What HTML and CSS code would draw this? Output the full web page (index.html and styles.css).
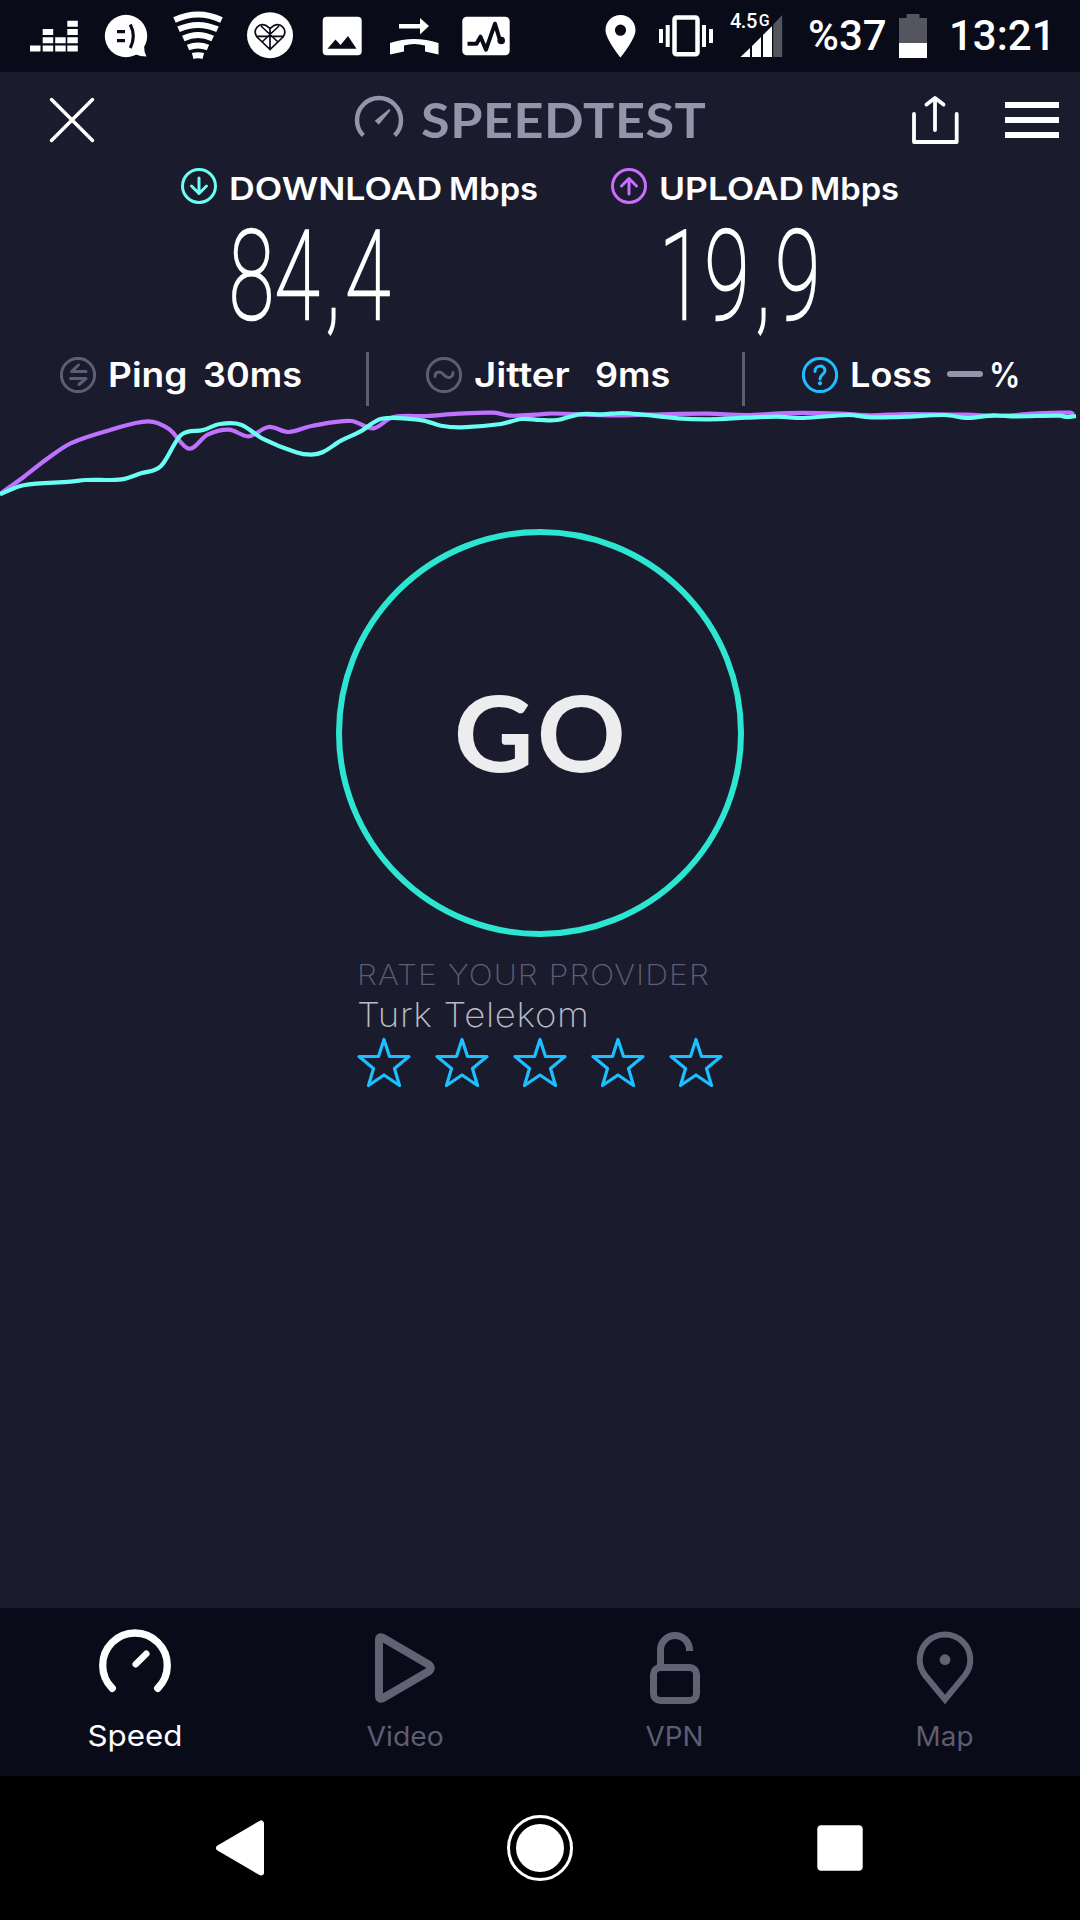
FILE: index.html
```
<!DOCTYPE html>
<html lang="en">
<head>
<meta charset="utf-8">
<title>Speedtest</title>
<link rel="stylesheet" href="styles.css">
</head>
<body>
<div class="screen">
  <div class="status">
    <svg class="tile" viewBox="18 0 72 72"><path d="M30 45.5h10.500v6H30zM42.700 45.500h10.500v6H42.700zM42.700 37.300h10.500v6H42.700zM42.700 29h10.500v6H42.700zM55.200 45.500h10.500v6H55.200zM55.200 37.300h10.500v6H55.200zM67.300 45.500h10.500v6H67.300zM67.300 37.300h10.500v6H67.300zM67.300 29h10.500v6H67.300zM67.300 20.800h10.500v6H67.300z"/></svg>
    <svg class="tile" viewBox="90 0 72 72"><circle cx="126" cy="36" r="21.200"/><path d="M144 46q0 6 2.500 10.500q-7 0-13-3z"/><path class="cut" d="M117 31.700h8M117 40.600h8M130.300 24.500q6 11.500 0 23.500"/></svg>
    <svg class="tile" viewBox="162 0 72 72"><path class="arc" d="M174.500 20Q198 9 221.500 20M178.500 29.300Q198 20.500 217.500 29.300M183.300 38.500Q198 31.500 212.700 38.500M188 47.500Q198 43.500 208 47.500M192.700 56Q198 54.500 203.300 56"/></svg>
    <svg class="tile" viewBox="234 0 72 72"><circle cx="270" cy="35.300" r="23"/><path class="web" d="M270 49.500L257 37C252 30 259 22 266 25.500L270 28.500L274 25.500C281 22 288 30 283 37ZM270 28V49M256 36.300h28M261 26l17 16M279 26l-17 16"/></svg>
    <svg class="tile" viewBox="306 0 72 72"><rect x="322.700" y="16.700" width="39" height="38.600" rx="4"/><path class="dark" d="M327.500 48.700L335.500 39.500L340.500 45L348 36L356.500 48.700Z"/></svg>
    <svg class="tile" viewBox="378 0 72 72"><path d="M399 24h21v-6l9 8-9 8.500v-6h-21zM390 43Q414 35 438.500 43V54.500L425 51.500V45.500Q414 42.500 404 45.500V51.500L390 54.500Z"/></svg>
    <svg class="tile" viewBox="450 0 72 72"><rect x="462.300" y="16.700" width="47.400" height="38.600" rx="4.500"/><path class="pulse" d="M467.500 43.700h9l4-7 5.500 13 9-26 4.500 15"/><circle class="dark" cx="501.200" cy="40.500" r="3.800"/></svg>
    <svg class="tile pin" viewBox="588 0 65 72"><path fill-rule="evenodd" d="M620.500 15c8.500 0 15 6.700 15 15.200C635.500 39 620.500 57.500 620.500 57.500S605.500 39 605.500 30.200C605.500 21.700 612 15 620.500 15zm0 9.600a5.600 5.600 0 1 0 0 11.200a5.600 5.600 0 0 0 0-11.200z"/></svg>
    <svg class="tile vibrate" viewBox="653 0 72 72"><rect class="phone" x="674.500" y="17.500" width="23" height="36.700" rx="2"/><path d="M659 29h4v14h-4zM665.700 25h4v22h-4zM702 25h4v22h-4zM709 29h4v14h-4z"/></svg>
    <div class="signal">
      <span class="net">4.5<sup>G</sup></span>
      <svg viewBox="740 14 43 44"><path d="M740.500 57L750 48v9zM752 46l9-9v20h-9zM763 35l9-9v31h-9z"/><path class="dim" d="M773.300 24.500l8.900-9.500v42h-8.900z"/></svg>
    </div>
    <span class="percent">%37</span>
    <svg class="battery" viewBox="899 14 28 44"><path class="dim" d="M899 18h7.500v-4h13v4H927v25h-28z"/><path d="M899 43h28v15h-28z"/></svg>
    <span class="clock">13:21</span>
  </div>

  <header class="header">
    <svg class="close" viewBox="48 96 48 48"><path d="M51.500 99.500l41 41M92.500 99.500l-41 41"/></svg>
    <svg class="logo" viewBox="354 95 50 44"><path class="ring" d="M363.300 135.500A22 22 0 1 1 394.700 135.500"/><path class="needle" d="M389.500 108.700L390.300 110.800L378.800 124.800L374.700 120.700Z"/></svg>
    <h1>SPEEDTEST</h1>
    <svg class="share" viewBox="911 95 50 50"><path d="M914 114v28h42.700v-28M935 99v31M926.500 104.500l8.500-6.500 8.500 6.500"/></svg>
    <svg class="menu" viewBox="0 0 54 36"><path d="M0 0h54v6H0zM0 15h54v6H0zM0 30h54v6H0z"/></svg>
  </header>

  <section class="results">
    <div class="result">
      <svg class="badge down" viewBox="0 0 36 36"><circle cx="18" cy="18" r="16.500"/><path d="M18 10v15.500M10.500 18l7.500 7.500 7.500-7.500"/></svg>
      <div><h2><span class="w-down">DOWNLOAD</span><span class="unit">Mbps</span></h2><p class="figure">84<span class="comma">,</span>4</p></div>
    </div>
    <div class="result">
      <svg class="badge up" viewBox="0 0 36 36"><circle cx="18" cy="18" r="16.500"/><path d="M18 26v-15.500M10.500 18l7.500-7.500 7.500 7.500"/></svg>
      <div><h2><span class="w-up">UPLOAD</span><span class="unit">Mbps</span></h2><p class="figure">19<span class="comma">,</span>9</p></div>
    </div>
  </section>

  <section class="quality">
    <div class="metric ping">
      <svg class="badge grey" viewBox="0 0 36 36"><circle cx="18" cy="18" r="16.600"/><path d="M26 14.500H11.500L18.500 8M10.500 21.500h15.500l-7 6"/></svg>
      <span class="name">Ping</span><span class="value">30ms</span>
    </div>
    <div class="metric jitter">
      <svg class="badge grey" viewBox="0 0 36 36"><circle cx="18" cy="18" r="16.600"/><path d="M9 19.500C9 14.500 14 13.500 18 18S27 20.500 27 15.500"/></svg>
      <span class="name">Jitter</span><span class="value">9ms</span>
    </div>
    <div class="metric loss">
      <svg class="badge blue" viewBox="0 0 36 36"><circle cx="18" cy="18" r="16.600"/><path d="M13 14.500c0-7 10-7 10-1 0 4-5 4-5 8.500"/><circle class="dot" cx="18" cy="26.300" r="2.100"/></svg>
      <span class="name">Loss</span><i class="dash"></i><span class="value">%</span>
    </div>
  </section>

  <svg class="chart" viewBox="0 406 1080 94">
    <path id="upload-line" class="line-up"/>
    <path id="download-line" class="line-down"/>
  </svg>

  <button class="go"><span>GO</span></button>

  <section class="rate">
    <p class="ask">RATE YOUR PROVIDER</p>
    <p class="provider">Turk Telekom</p>
    <div class="stars">
      <svg viewBox="0 0 54 51"><path d="M27 2.500L32.500 19.500H52L37.500 31.500L42.500 48.500L27 38L11.500 48.500L16.500 31.500L2 19.500H21.500Z"/></svg>
      <svg viewBox="0 0 54 51"><path d="M27 2.500L32.500 19.500H52L37.500 31.500L42.500 48.500L27 38L11.500 48.500L16.500 31.500L2 19.500H21.500Z"/></svg>
      <svg viewBox="0 0 54 51"><path d="M27 2.500L32.500 19.500H52L37.500 31.500L42.500 48.500L27 38L11.500 48.500L16.500 31.500L2 19.500H21.500Z"/></svg>
      <svg viewBox="0 0 54 51"><path d="M27 2.500L32.500 19.500H52L37.500 31.500L42.500 48.500L27 38L11.500 48.500L16.500 31.500L2 19.500H21.500Z"/></svg>
      <svg viewBox="0 0 54 51"><path d="M27 2.500L32.500 19.500H52L37.500 31.500L42.500 48.500L27 38L11.500 48.500L16.500 31.500L2 19.500H21.500Z"/></svg>
    </div>
  </section>

  <nav class="tabs">
    <a class="tab active"><svg viewBox="0 0 90 90"><path stroke-width="7.300" d="M22.300 66.300A32.300 32.300 0 1 1 67.700 66.300"/><path stroke-width="6.500" d="M45.700 42.300L56.300 31.700"/></svg><span class="t-speed">Speed</span></a>
    <a class="tab"><svg viewBox="0 0 90 90"><path stroke-width="8" d="M19 18Q19 13.500 24 16.500L68.500 42.500Q73 46 68.500 49.500L24 75.500Q19 78.500 19 74Z"/></svg><span class="t-video">Video</span></a>
    <a class="tab"><svg viewBox="0 0 90 90"><rect stroke-width="7" x="23.500" y="45.500" width="43" height="33" rx="7"/><path class="butt" stroke-width="7" d="M30.500 45V28a14.500 14.500 0 0 1 29 0v1"/></svg><span class="t-vpn">VPN</span></a>
    <a class="tab"><svg viewBox="0 0 90 90"><path class="miter" stroke-width="6" d="M45 77.500L25.200 53.500A25.300 25.300 0 1 1 64.800 53.500Z"/><circle class="pip" cx="45" cy="37.700" r="5.400"/></svg><span class="t-map">Map</span></a>
  </nav>

  <div class="system">
    <svg viewBox="0 0 72 72"><path class="back" d="M15 36L57 11.500V60.500Z"/></svg>
    <svg viewBox="0 0 72 72"><circle class="outer" cx="36" cy="36" r="31.500"/><circle cx="36" cy="36" r="24"/></svg>
    <svg viewBox="0 0 72 72"><rect x="13.300" y="13.300" width="45.400" height="45.400" rx="4"/></svg>
  </div>
</div>
<script src="chart.js"></script>
</body>
</html>
```
FILE: styles.css
```
* { box-sizing: border-box; }
body, h1, h2, p { margin: 0; font-weight: inherit; }
body { background: #1b1b2e; font-family: Inter, "Liberation Sans", sans-serif; color: #fff; }
svg { display: block; flex: none; fill: #fff; }
span { white-space: nowrap; }

.screen { width: 1080px; height: 1920px; display: flex; flex-direction: column; overflow: hidden; }

/* status bar */
.status { height: 72px; flex: none; background: #090b19; display: flex; align-items: center; padding-left: 18px; font-family: Roboto, sans-serif; font-weight: 500; font-size: 42px; line-height: 72px; }
.tile { width: 72px; height: 72px; }
.tile.pin { width: 65px; margin-left: 66px; }
.cut { fill: none; stroke: #090b19; stroke-width: 3.2; }
.arc { fill: none; stroke: #fff; stroke-width: 6; }
.web { fill: none; stroke: #090b19; stroke-width: 1.700; }
.dark { fill: #090b19; }
.pulse { fill: none; stroke: #090b19; stroke-width: 4; stroke-linejoin: round; }
.phone { fill: none; stroke: #fff; stroke-width: 4.500; }
.dim { fill: #55555f; }
.signal { width: 58px; height: 72px; display: grid; }
.signal > * { grid-area: 1 / 1; }
.signal svg { width: 43px; height: 44px; margin: 14px 0 0 15px; }
.net { font-size: 20px; line-height: 24px; margin: 9px 0 0 5px; letter-spacing: -.5px; }
.net sup { font-size: 16px; line-height: 0; vertical-align: 2.500px; margin-left: 2px; }
.percent { width: 91px; margin-left: 25px; }
.battery { width: 28px; height: 44px; }
.clock { margin-left: 22px; }

/* title row */
.header { height: 96px; flex: none; display: flex; align-items: flex-start; padding: 24px 21px 0 48px; }
.close { width: 48px; height: 48px; }
.close path { stroke: #fff; stroke-width: 3.500; stroke-linecap: round; }
.logo { width: 50px; height: 44px; margin: -1px 0 0 258px; }
.ring { fill: none; stroke: #9494ab; stroke-width: 4.500; }
.needle { fill: #9494ab; }
.header h1 { width: 291px; margin-left: 17px; font: 700 47px/48px Lato, sans-serif; letter-spacing: .5px; color: #9494ab; transform: scaleX(1.110); transform-origin: 0 0; }
.share { width: 50px; height: 50px; margin: -1px 0 0 199px; }
.share path { fill: none; stroke: #fff; stroke-width: 3.800; stroke-linecap: round; stroke-linejoin: round; }
.menu { width: 54px; height: 36px; margin: 6px 0 0 44px; }

/* download and upload figures */
.results { height: 182px; flex: none; display: flex; padding-left: 181px; }
.result { width: 430px; display: flex; gap: 12px; }
.badge { width: 36px; height: 36px; fill: none; stroke-width: 3; stroke-linecap: round; stroke-linejoin: round; }
.down { stroke: #6afff3; }
.up { stroke: #c86eff; }
.grey { stroke: #5d5d73; }
.blue { stroke: #1cbfff; }
.badge .dot { fill: #1cbfff; stroke: none; }
.result h2 { height: 42px; display: flex; font-size: 31.500px; line-height: 42px; font-weight: 600; }
.w-down { width: 220px; transform: scaleX(1.135); transform-origin: 0 0; }
.w-up { width: 150.500px; transform: scaleX(1.125); transform-origin: 0 0; }
.unit { transform: scaleX(1.040); transform-origin: 0 0; }
.figure { height: 130px; padding-top: 2px; font: 100 124px/130px Roboto, sans-serif; letter-spacing: 1px; transform: scaleX(.660); transform-origin: 0 0; -webkit-text-stroke: 2.600px #fff; }
.comma { margin: 0 6px 0 8px; }

/* ping, jitter, loss */
.quality { height: 56px; flex: none; display: flex; align-items: stretch; padding-top: 2px; }
.metric { display: flex; align-items: flex-start; font-size: 34px; line-height: 36px; font-weight: 600; height: 54px; padding-top: 5px; }
.ping { width: 369px; padding-left: 60px; border-right: 3px solid #5d5d73; }
.jitter { width: 376px; padding-left: 57px; border-right: 3px solid #5d5d73; }
.loss { padding-left: 57px; }
.metric .name { margin-left: 12px; }
.metric .name, .metric .value { transform-origin: 0 0; }
.metric .value { transform: scaleX(1.060); }
.ping .name { width: 95px; transform: scaleX(1.090); }
.jitter .name { width: 121px; transform: scaleX(1.130); }
.loss .name { width: 97px; transform: scaleX(1.060); }
.loss .value { transform: scaleX(.920); }
.dash { width: 36px; height: 6px; border-radius: 3px; margin: 14px 6px 0 0; background: #9494ab; }

.chart { width: 1080px; height: 94px; }
.chart path { fill: none; stroke-width: 4.200; stroke-linejoin: round; }
.line-up { stroke: #bf71ff; }
.line-down { stroke: #6afff3; }

.go { width: 408px; height: 408px; flex: none; margin: 29px auto 0; padding: 0 0 5px 3px; border: 6px solid #2ce6d1; border-radius: 50%; background: none; color: #ededf0; font: 700 106px/1 Lato, sans-serif; letter-spacing: 3px; }
.go span { display: inline-block; transform: scaleX(1.040); }

/* provider rating */
.rate { width: 366px; margin: 19px auto 0; }
.ask, .provider { white-space: nowrap; transform-origin: 0 0; }
.ask { height: 38px; font-size: 28.500px; line-height: 37px; font-weight: 250; letter-spacing: 1px; color: #5f5f73; transform: scaleX(1.112); }
.provider { height: 43px; font-size: 34.500px; line-height: 42px; font-weight: 250; letter-spacing: .6px; color: #bcbcc2; transform: scaleX(1.062); }
.stars { display: flex; gap: 24px; }
.stars svg { width: 54px; height: 51px; fill: none; stroke: #1cbfff; stroke-width: 3.200; stroke-linejoin: round; }

/* bottom tabs */
.tabs { height: 168px; flex: none; margin-top: auto; background: #090b19; display: grid; grid-template-columns: repeat(4, 1fr); }
.tab { display: flex; flex-direction: column; align-items: center; padding-top: 14px; font-size: 26.500px; line-height: 36px; color: #5d5d73; }
.tab svg { width: 90px; height: 90px; fill: none; stroke: #626275; stroke-linecap: round; stroke-linejoin: round; }
.tab.active { color: #fff; font-size: 29px; }
.tab.active svg { stroke: #fff; }
.tab span { margin-top: 6px; }
.t-speed { transform: scaleX(1.080); }
.t-video { transform: scaleX(1.070); }
.t-vpn, .t-map { transform: scaleX(1.050); }
.tab .butt { stroke-linecap: butt; }
.tab .miter { stroke-linejoin: miter; }
.tab .pip { fill: #626275; stroke: none; }

/* system navigation */
.system { height: 144px; flex: none; background: #000; display: flex; justify-content: center; align-items: center; gap: 228px; }
.system svg { width: 72px; height: 72px; }
.system .back { stroke: #fff; stroke-width: 6; stroke-linejoin: round; }
.system .outer { fill: none; stroke: #fff; stroke-width: 3; }
```
FILE: chart.js
```
const upload = [[0,494],[24,476.7],[46.5,459.3],[70.6,443.3],[110,430],[148,421.3],[169,429],[189,448.7],[207.6,434.7],[229,429.7],[248.6,436.3],[268.6,427],[288.6,432],[311.6,426],[351,421],[373.6,428.3],[392.5,417.3],[427,416],[458,413.7],[494,412.7],[511,415.7],[540,414.3],[552,413.5],[616,415.5],[671,414],[709,413.7],[746.6,415],[788,413],[839.6,413.5],[870.6,415.3],[905,414],[967,414.7],[1001,416],[1032,413.7],[1070,412.7],[1074,414.5]];
const download = [[0,494.3],[23.4,485.3],[70.6,481.7],[86,480],[122,479.3],[141,473.3],[161,466],[181,435],[203,430],[220,424],[241,424.7],[262,438.3],[296,452.3],[311.6,454.7],[323,452],[341,440.7],[360,431.7],[381.5,418.7],[422,420.3],[441,425.7],[462,427.3],[501,424],[521.7,419],[540,420],[557,420],[579.6,414.3],[602,414.3],[622.6,413],[643,414.7],[678,418.3],[709,419.3],[746.6,417.7],[777.6,416.7],[803,418],[848,415],[870.6,417.3],[908,416.7],[944.6,415],[968,418],[993,415.3],[1015,416.3],[1060,415.7],[1067,417],[1076,416]];

// Smooth curve through the samples, tangents taken from the neighbouring points
function curve(p) {
  let d = `M${p[0]}`;
  for (let i = 0; i < p.length - 1; i++) {
    const a = p[i - 1] || p[i], b = p[i], c = p[i + 1], e = p[i + 2] || c;
    const h = (c[0] - b[0]) / 3;
    const s1 = (c[1] - a[1]) / (c[0] - a[0]);
    const s2 = (e[1] - b[1]) / (e[0] - b[0]);
    d += `C${b[0] + h},${b[1] + h * s1} ${c[0] - h},${c[1] - h * s2} ${c[0]},${c[1]}`;
  }
  return d;
}
document.getElementById("upload-line").setAttribute("d", curve(upload));
document.getElementById("download-line").setAttribute("d", curve(download));
```
